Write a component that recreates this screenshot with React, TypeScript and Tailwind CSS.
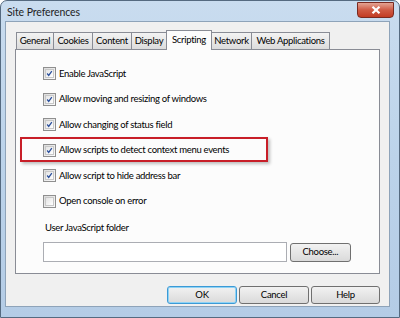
import { useState } from "react";

const font = { fontFamily: 'Lato, "Noto Sans", sans-serif' };

function Check({ checked }: { checked: boolean }) {
  return (
    <span className="flex h-[13px] w-[13px] shrink-0 items-center justify-center border border-[#8f8f8f] bg-gradient-to-br from-[#dcdcdc] to-[#fbfbfb]">
      <span className="flex h-[9px] w-[9px] items-center justify-center border border-[#c8c8c8] bg-gradient-to-br from-[#e4e4e4] to-[#ffffff]">
        {checked && (
          <svg width="9" height="9" viewBox="0 0 9 9">
            <path d="M1.5 4.5 L3.5 7 L7.5 1.5" fill="none" stroke="#2a4f9c" strokeWidth="1.6" />
          </svg>
        )}
      </span>
    </span>
  );
}

const tabs = [
  { name: "General", w: "w-[38px]" },
  { name: "Cookies", w: "w-[40px]" },
  { name: "Content", w: "w-[40px]" },
  { name: "Display", w: "w-[36px]" },
  { name: "Scripting", w: "w-[46px]" },
  { name: "Network", w: "w-[41px]" },
  { name: "Web Applications", w: "w-[79px]" },
];

const options = [
  { label: "Enable JavaScript", on: true },
  { label: "Allow moving and resizing of windows", on: true },
  { label: "Allow changing of status field", on: true },
  { label: "Allow scripts to detect context menu events", on: true },
  { label: "Allow script to hide address bar", on: true },
  { label: "Open console on error", on: false },
];

export default function App() {
  const [active] = useState("Scripting");

  return (
    <div
      style={font}
      className="flex h-[318px] w-[400px] flex-col overflow-hidden rounded-t-[7px] border border-[#556a80] bg-gradient-to-b from-[#c9dcef] via-[#bcd3ea] to-[#b4cce6] text-[9.5px] tracking-[-0.3px] text-black"
    >
      {/* title bar */}
      <div className="flex h-[20px] shrink-0 items-start">
        <span className="pl-[6px] pt-[4px] text-[10.5px] leading-[14px] tracking-[-0.1px] text-[#1e1e1e]">Site Preferences</span>
        <button className="ml-auto mr-[5px] mt-[1px] flex h-[16px] w-[37px] items-center justify-center rounded-b-[4px] border border-[#7a2a20] bg-gradient-to-b from-[#e3a393] via-[#cf5a44] to-[#c23b22]">
          <svg width="10" height="8" viewBox="0 0 10 8">
            <path d="M1.5 0.8 L8.5 7.2 M8.5 0.8 L1.5 7.2" stroke="#ffffff" strokeWidth="2.2" />
          </svg>
        </button>
      </div>

      {/* client area */}
      <div className="ml-[4px] mr-[9px] mb-[10px] flex flex-1 flex-col border border-[#8ea3b9] bg-[#f0f0f0] px-[9px] pt-[8px]">
        {/* tab strip */}
        <div className="flex h-[19px] items-end pl-[1px]">
          {tabs.map((t) =>
            t.name === active ? (
              <div
                key={t.name}
                className={`relative z-10 -mb-[1px] -ml-[1px] flex h-[20px] items-center justify-center whitespace-nowrap border border-b-0 border-[#898c95] bg-[#fcfcfc] ${t.w}`}
              >
                {t.name}
              </div>
            ) : (
              <div
                key={t.name}
                className={`-ml-[1px] flex h-[17px] items-center justify-center whitespace-nowrap border border-b-0 border-[#898c95] bg-gradient-to-b from-[#f3f3f3] to-[#dcdcdc] first:ml-0 ${t.w}`}
              >
                {t.name}
              </div>
            )
          )}
        </div>

        {/* panel */}
        <div className="relative flex h-[225px] flex-col border border-[#898c95] bg-[#fcfcfc] pl-[27px] pr-[28px] pt-[11px]">
          {options.map((o) => (
            <div key={o.label} className="flex h-[25.5px] items-center gap-[3px]">
              <Check checked={o.on} />
              <span>{o.label}</span>
            </div>
          ))}
          <div className="mt-[5px] flex h-[18px] items-center pl-[2px]">User JavaScript folder</div>
          <div className="mt-[5px] flex items-center gap-[3px]">
            <div className="h-[20px] w-[246px] border border-[#abadb3] bg-white" />
            <button className="h-[19px] w-[62px] rounded-[3px] border border-[#707070] bg-gradient-to-b from-[#f2f2f2] to-[#dadada]">
              Choose...
            </button>
          </div>

          {/* highlight */}
          <div className="absolute left-[4px] top-[87px] h-[25px] w-[248px] border-2 border-[#c81e28] shadow-[2px_2px_3px_rgba(0,0,0,0.25)]" />
        </div>

        {/* buttons */}
        <div className="mt-[12px] flex justify-end gap-[2px]">
          <button className="h-[18px] w-[70px] rounded-[3px] border border-[#3c9ad6] bg-gradient-to-b from-[#f2f2f2] to-[#dadada] shadow-[inset_0_0_0_1px_#8fd3f5]">
            OK
          </button>
          <button className="h-[18px] w-[70px] rounded-[3px] border border-[#707070] bg-gradient-to-b from-[#f2f2f2] to-[#dadada]">
            Cancel
          </button>
          <button className="h-[18px] w-[69px] rounded-[3px] border border-[#707070] bg-gradient-to-b from-[#f2f2f2] to-[#dadada]">
            Help
          </button>
        </div>
      </div>
    </div>
  );
}
